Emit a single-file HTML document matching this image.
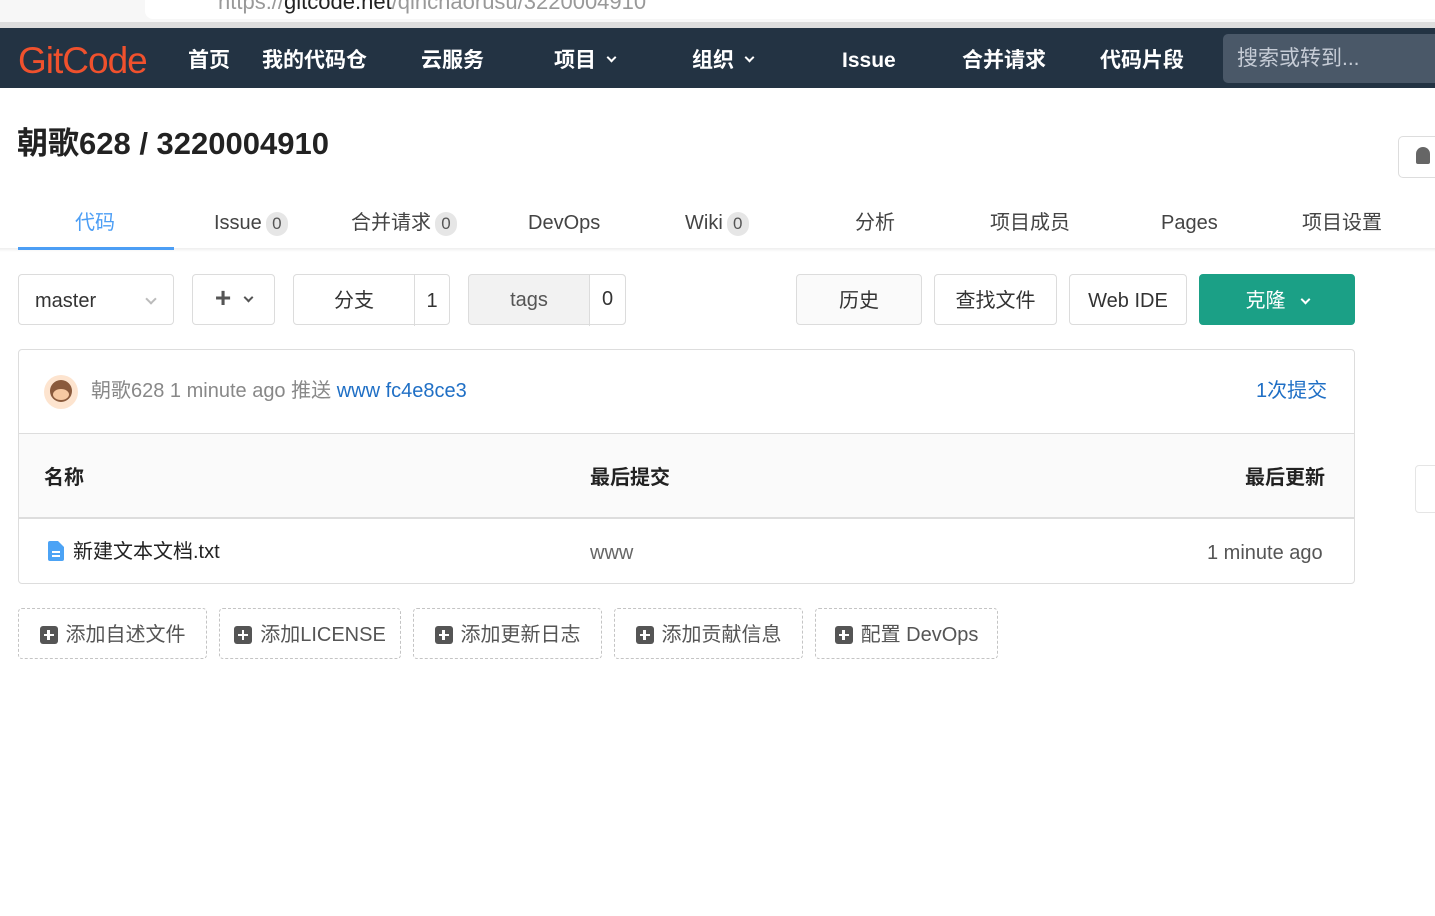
<!DOCTYPE html>
<html><head><meta charset="utf-8">
<style>
*{margin:0;padding:0;box-sizing:border-box}
body{width:1435px;height:916px;overflow:hidden;background:#fff;font-family:"Liberation Sans","Noto Sans CJK SC",sans-serif;position:relative;color:#333}
.a{position:absolute;white-space:nowrap;line-height:28px}
.nav{color:#fff;font-weight:bold;font-size:21px;top:47px}
.tab{font-size:20px;color:#444;top:209px}
.badge{display:inline-block;background:#e6e6e6;border-radius:12px;width:22px;height:24px;text-align:center;font-size:17px;line-height:24px;color:#555;vertical-align:middle;margin-left:4px}
.btn{position:absolute;top:274px;height:51px;border:1px solid #dcdcdc;border-radius:4px;font-size:20px;line-height:28px;color:#333;display:flex;align-items:center;justify-content:center;background:#fff;padding-top:3px}
.dash{position:absolute;top:608px;height:51px;border:1px dashed #c4c4c4;border-radius:4px;font-size:20px;line-height:28px;color:#555;display:flex;align-items:center;justify-content:center;gap:8px;padding-top:2px}
.pl{width:18px;height:18px;background:#555;border-radius:3px;position:relative;display:inline-block}
.pl:before{content:"";position:absolute;left:4px;top:8px;width:10px;height:2.5px;background:#fff}
.pl:after{content:"";position:absolute;left:7.7px;top:4px;width:2.5px;height:10px;background:#fff}
.chev{display:inline-block;width:8px;height:8px;border-right:2.5px solid currentColor;border-bottom:2.5px solid currentColor;transform:rotate(45deg);vertical-align:middle;margin-top:-8px}
</style></head><body>
<div class="a" style="left:0;top:0;width:1435px;height:22px;background:#f7f7f7"></div>
<div class="a" style="left:145px;top:0;width:1290px;height:19px;background:#fff;border-radius:0 0 0 8px"></div>
<div class="a" style="left:218px;top:-12px;font-size:22px;color:#999">https://<span style="color:#222">gitcode.net</span>/qinchaorusu/3220004910</div>
<div class="a" style="left:0;top:22px;width:1435px;height:6px;background:#ddd"></div>
<div class="a" style="left:0;top:28px;width:1435px;height:60px;background:#233343"></div>
<div class="a" style="left:18px;top:45px;font-size:37px;line-height:32px;color:#f0512d;letter-spacing:-1px">GitCode</div>
<div class="a nav" style="left:188px">首页</div>
<div class="a nav" style="left:262px">我的代码仓</div>
<div class="a nav" style="left:421px">云服务</div>
<div class="a nav" style="left:554px">项目 <span class="chev" style="width:7px;height:7px;margin-left:6px"></span></div>
<div class="a nav" style="left:692px">组织 <span class="chev" style="width:7px;height:7px;margin-left:6px"></span></div>
<div class="a nav" style="left:842px">Issue</div>
<div class="a nav" style="left:962px">合并请求</div>
<div class="a nav" style="left:1100px">代码片段</div>
<div class="a" style="left:1223px;top:34px;width:220px;height:49px;background:#4a5868;border-radius:5px"></div>
<div class="a" style="left:1237px;top:45px;font-size:21px;color:#c6ccd6">搜索或转到...</div>
<div class="a" style="left:17px;top:128px;font-size:31px;line-height:32px;font-weight:bold;color:#222">朝歌628 / 3220004910</div>
<div class="a" style="left:1398px;top:136px;width:50px;height:42px;border:1px solid #ddd;border-radius:5px"></div>
<div class="a" style="left:1416px;top:147px;width:14px;height:17px;background:#666;border-radius:7px 7px 2px 2px"></div>
<div class="a" style="left:0;top:248px;width:1435px;height:4px;background:linear-gradient(#eee,#fff)"></div>
<div class="a tab" style="left:75px;color:#4c9ef5">代码</div>
<div class="a" style="left:18px;top:247px;width:156px;height:3px;background:#4c9ef5"></div>
<div class="a tab" style="left:214px">Issue<span class="badge">0</span></div>
<div class="a tab" style="left:351px">合并请求<span class="badge">0</span></div>
<div class="a tab" style="left:528px">DevOps</div>
<div class="a tab" style="left:685px">Wiki<span class="badge">0</span></div>
<div class="a tab" style="left:855px">分析</div>
<div class="a tab" style="left:990px">项目成员</div>
<div class="a tab" style="left:1161px">Pages</div>
<div class="a tab" style="left:1302px">项目设置</div>
<div class="btn" style="left:18px;width:156px;justify-content:space-between;padding:3px 18px 0 16px">master <span class="chev" style="color:#bbb;width:8px;height:8px;border-width:2px;margin-top:-4px"></span></div>
<div class="btn" style="left:192px;width:83px;gap:14px;color:#555;padding-top:0"><span style="font-size:28px;font-weight:bold;margin-top:-4px">+</span><span class="chev" style="width:7px;height:7px;margin-top:-4px"></span></div>
<div class="btn" style="left:293px;width:157px;justify-content:flex-start;padding-top:0"><span style="width:121px;text-align:center;border-right:1px solid #dcdcdc;line-height:49px;padding-top:3px">分支</span><span style="width:34px;text-align:center;padding-top:3px">1</span></div>
<div class="btn" style="left:468px;width:158px;justify-content:flex-start;background:#f2f2f2;padding-top:0"><span style="width:121px;text-align:center;border-right:1px solid #dcdcdc;line-height:52px;color:#555">tags</span><span style="width:35px;text-align:center;background:#fff;line-height:49px;border-radius:0 4px 4px 0">0</span></div>
<div class="btn" style="left:796px;width:126px;background:#fafafa">历史</div>
<div class="btn" style="left:934px;width:123px">查找文件</div>
<div class="btn" style="left:1069px;width:118px">Web IDE</div>
<div class="btn" style="left:1199px;width:156px;background:#1ba086;border-color:#1ba086;color:#fff;gap:16px">克隆 <span class="chev" style="width:7px;height:7px;margin-top:-4px"></span></div>
<div class="a" style="left:18px;top:349px;width:1337px;height:235px;border:1px solid #ddd;border-radius:4px"></div>
<div class="a" style="left:19px;top:433px;width:1335px;height:86px;background:#fafafa;border-top:1px solid #ddd;border-bottom:2px solid #ddd"></div>
<div class="a" style="left:44px;top:375px;width:34px;height:34px;border-radius:50%;background:#fde4cf"></div>
<div class="a" style="left:50px;top:380px;width:22px;height:22px;border-radius:50%;background:#8a5a3c"></div>
<div class="a" style="left:53px;top:389px;width:16px;height:11px;border-radius:50%;background:#f7c9a2"></div>
<div class="a" style="left:91px;top:377px;font-size:20px;color:#888">朝歌628 1 minute ago 推送 <span style="color:#1f6fc5">www fc4e8ce3</span></div>
<div class="a" style="left:1256px;top:377px;font-size:20px;color:#1f6fc5">1次提交</div>
<div class="a" style="left:44px;top:464px;font-size:20px;font-weight:bold;color:#222">名称</div>
<div class="a" style="left:590px;top:464px;font-size:20px;font-weight:bold;color:#222">最后提交</div>
<div class="a" style="left:1245px;top:464px;font-size:20px;font-weight:bold;color:#222">最后更新</div>
<svg class="a" style="left:48px;top:541px" width="16" height="20" viewBox="0 0 16 20"><path d="M2 0h8l6 6v12a2 2 0 0 1-2 2H2a2 2 0 0 1-2-2V2a2 2 0 0 1 2-2z" fill="#4ca3f5"/><rect x="4" y="10" width="8" height="2" fill="#fff"/><rect x="4" y="14" width="8" height="2" fill="#fff"/></svg>
<div class="a" style="left:73px;top:538px;font-size:20px;color:#222">新建文本文档.txt</div>
<div class="a" style="left:590px;top:539px;font-size:20px;color:#666">www</div>
<div class="a" style="left:1207px;top:539px;font-size:20px;color:#555">1 minute ago</div>
<div class="dash" style="left:18px;width:189px"><span class="pl"></span>添加自述文件</div>
<div class="dash" style="left:219px;width:182px"><span class="pl"></span>添加LICENSE</div>
<div class="dash" style="left:413px;width:189px"><span class="pl"></span>添加更新日志</div>
<div class="dash" style="left:614px;width:189px"><span class="pl"></span>添加贡献信息</div>
<div class="dash" style="left:815px;width:183px"><span class="pl"></span>配置 DevOps</div>
<div class="a" style="left:1415px;top:465px;width:30px;height:48px;border:1px solid #e5e5e5;border-radius:4px"></div>
</body></html>
